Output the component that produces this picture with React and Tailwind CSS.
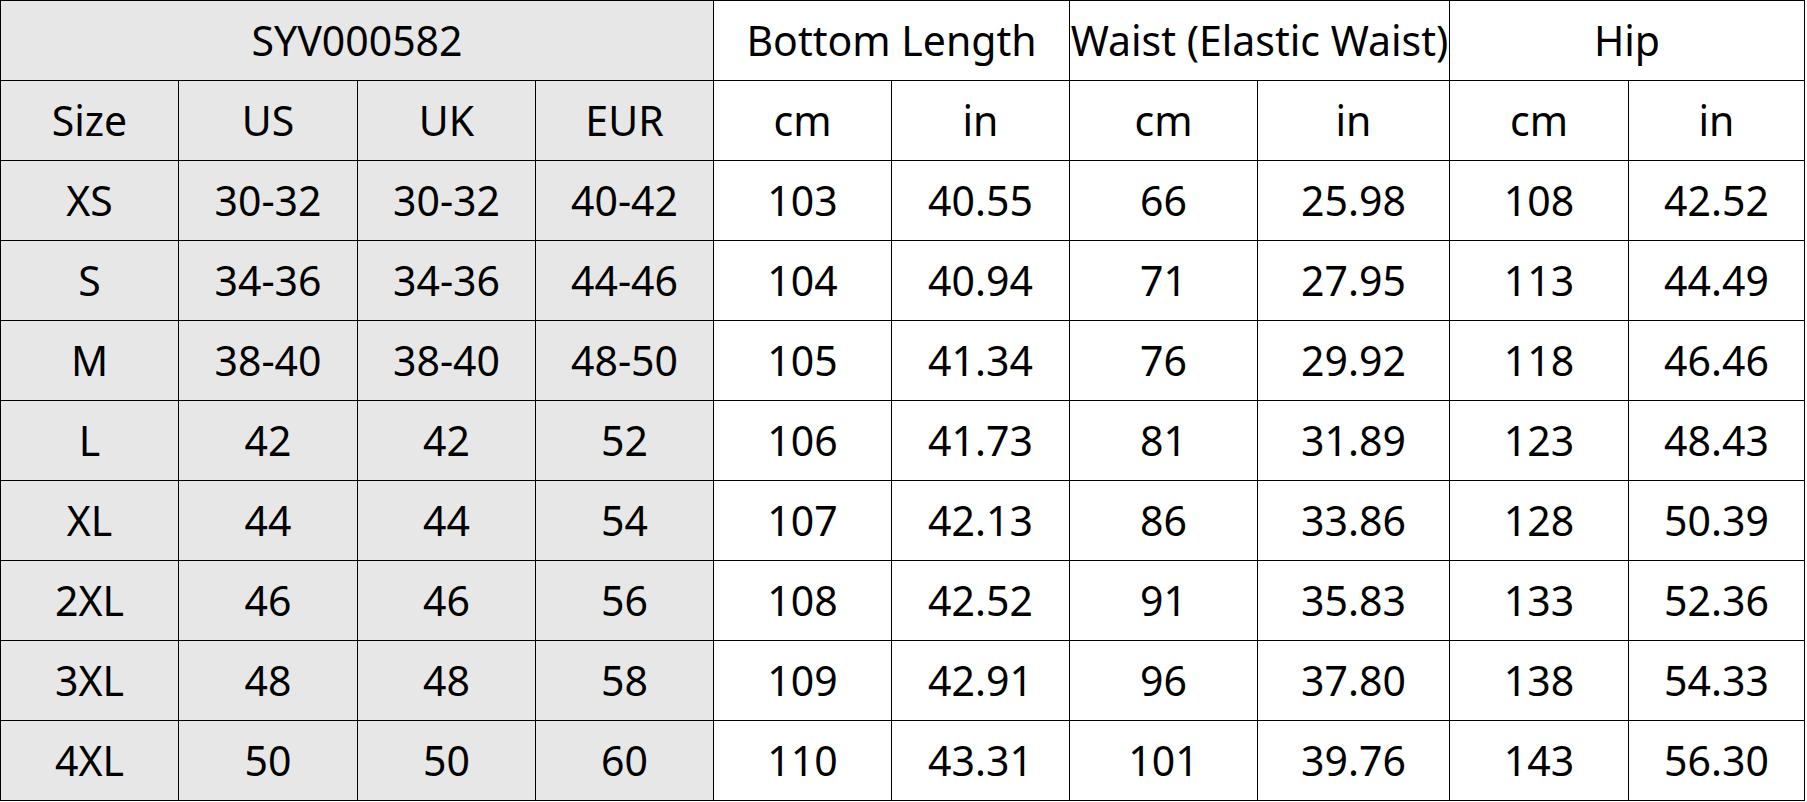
const rows = [
  ["XS", "30-32", "30-32", "40-42", "103", "40.55", "66", "25.98", "108", "42.52"],
  ["S", "34-36", "34-36", "44-46", "104", "40.94", "71", "27.95", "113", "44.49"],
  ["M", "38-40", "38-40", "48-50", "105", "41.34", "76", "29.92", "118", "46.46"],
  ["L", "42", "42", "52", "106", "41.73", "81", "31.89", "123", "48.43"],
  ["XL", "44", "44", "54", "107", "42.13", "86", "33.86", "128", "50.39"],
  ["2XL", "46", "46", "56", "108", "42.52", "91", "35.83", "133", "52.36"],
  ["3XL", "48", "48", "58", "109", "42.91", "96", "37.80", "138", "54.33"],
  ["4XL", "50", "50", "60", "110", "43.31", "101", "39.76", "143", "56.30"],
];

const sub = ["Size", "US", "UK", "EUR", "cm", "in", "cm", "in", "cm", "in"];

function Cell({ children, gray, className = "" }) {
  return (
    <div
      className={
        "flex items-center justify-center overflow-hidden whitespace-nowrap text-black " +
        (gray ? "bg-[#e7e7e7] " : "bg-white ") +
        className
      }
    >
      {children}
    </div>
  );
}

export default function App() {
  return (
    <div className="w-[1807px] h-[802px] bg-white">
      <div
        className="grid w-[1805px] gap-px bg-black p-px grid-cols-[177px_178px_177px_177px_177px_177px_187px_191px_178px_175px] grid-rows-[repeat(10,79px)] text-[41px] leading-none"
        style={{ fontFamily: '"Noto Sans", "Open Sans", sans-serif' }}
      >
        <Cell gray className="col-span-4">SYV000582</Cell>
        <Cell className="col-span-2">Bottom Length</Cell>
        <Cell className="col-span-2">Waist (Elastic Waist)</Cell>
        <Cell className="col-span-2">Hip</Cell>
        {sub.map((s, i) => (
          <Cell key={"s" + i} gray={i < 4}>
            {s}
          </Cell>
        ))}
        {rows.map((r, ri) =>
          r.map((v, ci) => (
            <Cell key={ri + "-" + ci} gray={ci < 4}>
              {v}
            </Cell>
          ))
        )}
      </div>
    </div>
  );
}
